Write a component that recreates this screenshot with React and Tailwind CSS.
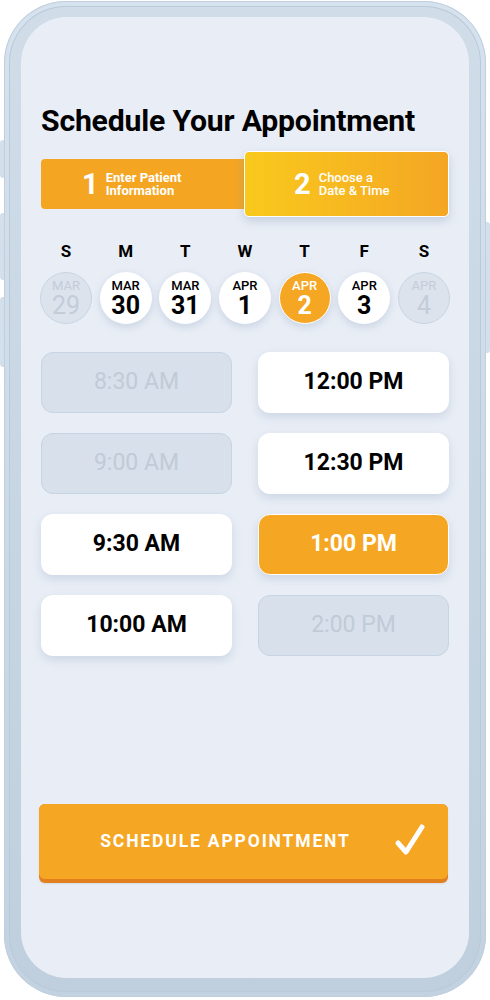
import React from 'react'

const DAYS = [
  { d: 'S', m: 'MAR', n: '29', state: 'off' },
  { d: 'M', m: 'MAR', n: '30', state: 'on' },
  { d: 'T', m: 'MAR', n: '31', state: 'on' },
  { d: 'W', m: 'APR', n: '1', state: 'on' },
  { d: 'T', m: 'APR', n: '2', state: 'sel' },
  { d: 'F', m: 'APR', n: '3', state: 'on' },
  { d: 'S', m: 'APR', n: '4', state: 'off' },
]

const SLOTS = [
  { t: '8:30 AM', state: 'off' },
  { t: '12:00 PM', state: 'on' },
  { t: '9:00 AM', state: 'off' },
  { t: '12:30 PM', state: 'on' },
  { t: '9:30 AM', state: 'on' },
  { t: '1:00 PM', state: 'sel' },
  { t: '10:00 AM', state: 'on' },
  { t: '2:00 PM', state: 'off' },
]

const circleStyles = {
  off: 'bg-[#dce3ed] border border-[#c9d5e3] text-[#c3cdd9]',
  on: 'bg-white text-black shadow-[0_3px_8px_rgba(140,160,190,0.35)]',
  sel: 'bg-[#f5a623] border border-white text-white shadow-[0_3px_8px_rgba(140,160,190,0.35)]',
}

const slotStyles = {
  off: 'bg-[#d8e0eb] border border-[#c6d4e3] text-[#c1cbd7] font-normal',
  on: 'bg-white text-black font-bold shadow-[0_4px_10px_rgba(140,160,190,0.3)]',
  sel: 'bg-[#f5a623] border border-white text-white font-bold shadow-[0_4px_10px_rgba(140,160,190,0.3)]',
}

export default function App() {
  return (
    <div className="relative w-[490px] h-[1000px] bg-white overflow-hidden" style={{ fontFamily: 'Roboto, "Liberation Sans", sans-serif' }}>
      {/* side buttons */}
      <div className="absolute left-0 top-[140px] w-[6px] h-[38px] rounded-l-[3px] bg-[#d3dfeb]" />
      <div className="absolute left-0 top-[213px] w-[6px] h-[67px] rounded-l-[3px] bg-[#d3dfeb]" />
      <div className="absolute left-0 top-[297px] w-[6px] h-[70px] rounded-l-[3px] bg-[#d3dfeb]" />
      <div className="absolute right-0 top-[222px] w-[6px] h-[131px] rounded-r-[3px] bg-[#d3dfeb]" />

      {/* phone frame */}
      <div className="relative ml-[4px] mt-[1px] w-[482px] h-[996px] rounded-[62px] bg-gradient-to-b from-[#d6e2ee] to-[#c3d2e0] p-[5px] shadow-[inset_0_0_0_1px_#c0cfdd]">
        <div className="w-full h-full rounded-[57px] bg-gradient-to-b from-[#d0dde9] to-[#bfcfdd] p-[12px] pb-[14px] pt-[11px] shadow-[inset_0_0_0_1px_#b9cad9]">
          <div className="w-full h-full rounded-[46px] bg-[#e9eef6] px-[20px] pt-[86px]">
            <h1 className="text-[30.2px] leading-[36px] font-bold text-black tracking-[-0.2px]">Schedule Your Appointment</h1>

            {/* steps */}
            <div className="mt-[12px] flex items-center w-[408px]">
              <div className="w-[205px] h-[50px] rounded-l-[4px] bg-[#f4a623] flex items-center pl-[41px] gap-[7px] text-white">
                <span className="text-[29px] font-bold leading-none">1</span>
                <span className="text-[13px] font-bold leading-[13px]">Enter Patient<br />Information</span>
              </div>
              <div className="w-[205px] h-[66px] -ml-[2px] rounded-[5px] border border-white bg-gradient-to-r from-[#f9c91c] to-[#f4a623] flex items-center pl-[49px] gap-[8px] text-white shadow-[0_4px_10px_rgba(130,150,180,0.35)]">
                <span className="text-[29px] font-bold leading-none">2</span>
                <span className="text-[13px] font-medium leading-[13px]">Choose a<br />Date &amp; Time</span>
              </div>
            </div>

            {/* days */}
            <div className="mt-[24px] w-[410px] -ml-[1px] flex justify-between">
              {DAYS.map((x, i) => (
                <div key={i} className="flex flex-col items-center w-[52px]">
                  <span className="text-[17px] font-bold leading-[20px] text-black">{x.d}</span>
                  <div className={`mt-[11px] w-[52px] h-[52px] rounded-full flex flex-col items-center justify-center ${circleStyles[x.state]}`}>
                    <span className={`text-[13px] leading-[14px] ${x.state === 'off' ? 'font-normal' : 'font-medium'}`}>{x.m}</span>
                    <span className={`text-[25px] leading-[25px] ${x.state === 'off' ? 'font-normal' : 'font-bold'}`}>{x.n}</span>
                  </div>
                </div>
              ))}
            </div>

            {/* slots */}
            <div className="mt-[28px] grid grid-cols-[191px_191px] gap-x-[26px] gap-y-[20px]">
              {SLOTS.map((s, i) => (
                <div key={i} className={`h-[61px] rounded-[12px] flex items-center justify-center text-[23px] ${slotStyles[s.state]}`}>
                  {s.t}
                </div>
              ))}
            </div>

            {/* schedule button */}
            <div className="mt-[148px] -ml-[2px] w-[409px] h-[79px] rounded-[6px] bg-[#e27f1e] pb-[4px] shadow-[0_1px_2px_rgba(0,0,0,0.08)]">
              <div className="relative h-full rounded-[6px] bg-[#f5a623] flex items-center justify-center">
                <span className="text-[17.5px] font-bold tracking-[1.85px] text-white -ml-[36px]">SCHEDULE APPOINTMENT</span>
                <svg className="absolute right-[22px] top-[19px]" width="32" height="34" viewBox="0 0 32 34" fill="none">
                  <path d="M4 20 L12 29 L28 4" stroke="white" strokeWidth="5" strokeLinecap="round" strokeLinejoin="round" />
                </svg>
              </div>
            </div>
          </div>
        </div>
      </div>
    </div>
  )
}
